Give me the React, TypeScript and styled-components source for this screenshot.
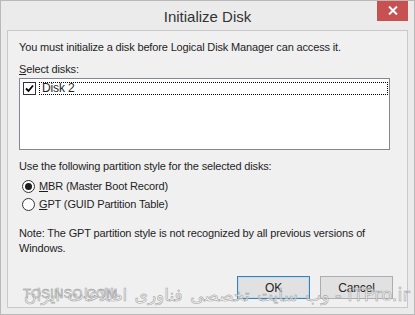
import styled, { createGlobalStyle } from 'styled-components';

const GlobalStyle = createGlobalStyle`
  html, body {
    margin: 0;
    padding: 0;
    background: #e9e9e9;
  }
  body {
    font-family: "Liberation Sans", Arial, sans-serif;
    font-size: 11px;
    letter-spacing: -0.15px;
    color: #1e1e1e;
  }
`;

const Window = styled.div`
  position: relative;
  width: 415px;
  height: 315px;
  box-sizing: border-box;
  background: #ebebeb;
  border: 1px solid #b9b9b9;
  display: flex;
  flex-direction: column;
  overflow: hidden;
`;

const TitleBar = styled.div`
  height: 29px;
  display: flex;
  align-items: center;
  justify-content: center;
  position: relative;
`;

const Title = styled.div`
  font-size: 15px;
  letter-spacing: 0;
  color: #333;
  margin-top: 2px;
`;

const CloseButton = styled.div`
  position: absolute;
  top: -1px;
  right: 6px;
  width: 31px;
  height: 21px;
  background: #c75050;
  display: flex;
  align-items: center;
  justify-content: center;
`;

const Client = styled.div`
  flex: 1;
  margin: 0 6px 6px 6px;
  background: #f0f0f0;
  border: 1px solid #c9c9c9;
  padding: 9px 11px 0 11px;
  display: flex;
  flex-direction: column;
`;

const Text = styled.div<{ $top?: number }>`
  margin-top: ${p => p.$top ?? 0}px;
  line-height: 15px;
  white-space: nowrap;
`;

const ListBox = styled.div`
  margin-top: 1px;
  height: 72px;
  width: 371px;
  background: #fff;
  border: 1px solid #828790;
  box-sizing: border-box;
  padding: 3px 1px 1px 1px;
`;

const ListItem = styled.div`
  display: flex;
  align-items: center;
  height: 13px;
  gap: 3px;
  padding-left: 2px;
`;

const CheckBox = styled.div`
  width: 11px;
  height: 11px;
  border: 1px solid #333;
  background: #fff;
  display: flex;
  align-items: center;
  justify-content: center;
`;

const ItemLabel = styled.div`
  flex: 1;
  border: 1px dotted #000;
  padding-left: 2px;
  line-height: 11px;
  font-size: 12px;
`;

const RadioGroup = styled.div`
  margin-top: 3px;
  display: flex;
  flex-direction: column;
`;

const RadioRow = styled.label`
  display: flex;
  align-items: center;
  gap: 4px;
  margin-left: 3px;
  height: 18px;
`;

const Radio = styled.span<{ $checked?: boolean }>`
  width: 11px;
  height: 11px;
  border-radius: 50%;
  border: 1px solid #333;
  background: #fff;
  display: flex;
  align-items: center;
  justify-content: center;
  &::after {
    content: '';
    width: 7px;
    height: 7px;
    border-radius: 50%;
    background: ${p => (p.$checked ? '#1e1e1e' : 'transparent')};
  }
`;

const ButtonRow = styled.div`
  display: flex;
  justify-content: flex-end;
  gap: 10px;
  margin-top: 20px;
  padding-right: 3px;
`;

const Button = styled.div<{ $default?: boolean }>`
  width: 73px;
  height: 23px;
  box-sizing: border-box;
  display: flex;
  align-items: center;
  justify-content: center;
  font-size: 12px;
  background: #e1e1e1;
  border: 1px solid ${p => (p.$default ? '#3c7fb1' : '#adadad')};
  ${p => p.$default && 'box-shadow: inset 0 0 0 1px #bcdcf4;'}
`;

const WatermarkLatin = styled.div`
  position: absolute;
  left: 22px;
  top: 285px;
  font-size: 13px;
  letter-spacing: 0.2px;
  color: #f4f4f4;
  -webkit-text-stroke: 0.5px #8a8a8a;
`;

const WatermarkLine = styled.div`
  position: absolute;
  left: 16px;
  right: 4px;
  top: 283px;
  direction: ltr;
  white-space: nowrap;
  font-family: "DejaVu Sans", sans-serif;
  letter-spacing: 0;
  color: rgba(255, 255, 255, 0.5);
  -webkit-text-stroke: 0.6px #a4a4a4;
  text-align: right;
`;

const WatermarkPersian = styled.span`
  font-size: 17px;
  word-spacing: 2px;
`;

const WatermarkSite = styled.span`
  font-size: 18px;
`;

const U = styled.span`
  text-decoration: underline;
`;

export default function App() {
  return (
    <>
      <GlobalStyle />
      <Window>
        <TitleBar>
          <Title>Initialize Disk</Title>
          <CloseButton>
            <svg width="10" height="9" viewBox="0 0 10 9">
              <path d="M1 0.5 L9 8.5 M9 0.5 L1 8.5" stroke="#fff" strokeWidth="2" />
            </svg>
          </CloseButton>
        </TitleBar>
        <Client>
          <Text>You must initialize a disk before Logical Disk Manager can access it.</Text>
          <Text $top={7}>
            <U>S</U>elect disks:
          </Text>
          <ListBox>
            <ListItem>
              <CheckBox>
                <svg width="9" height="9" viewBox="0 0 9 9">
                  <path d="M1 4.5 L3.5 7 L8 1.5" stroke="#000" strokeWidth="1.8" fill="none" />
                </svg>
              </CheckBox>
              <ItemLabel>Disk 2</ItemLabel>
            </ListItem>
          </ListBox>
          <Text $top={9}>Use the following partition style for the selected disks:</Text>
          <RadioGroup>
            <RadioRow>
              <Radio $checked />
              <span>
                <U>M</U>BR (Master Boot Record)
              </span>
            </RadioRow>
            <RadioRow>
              <Radio />
              <span>
                <U>G</U>PT (GUID Partition Table)
              </span>
            </RadioRow>
          </RadioGroup>
          <Text $top={13}>
            Note: The GPT partition style is not recognized by all previous versions of
            <br />
            Windows.
          </Text>
          <ButtonRow>
            <Button $default>OK</Button>
            <Button>Cancel</Button>
          </ButtonRow>
        </Client>
        <WatermarkLatin>TOSINSO.COM</WatermarkLatin>
        <WatermarkLine>
          <WatermarkPersian>وب سایت تخصصی فناوری اطلاعات ایران</WatermarkPersian>
          <WatermarkSite> - ITPro.ir</WatermarkSite>
        </WatermarkLine>
      </Window>
    </>
  );
}
